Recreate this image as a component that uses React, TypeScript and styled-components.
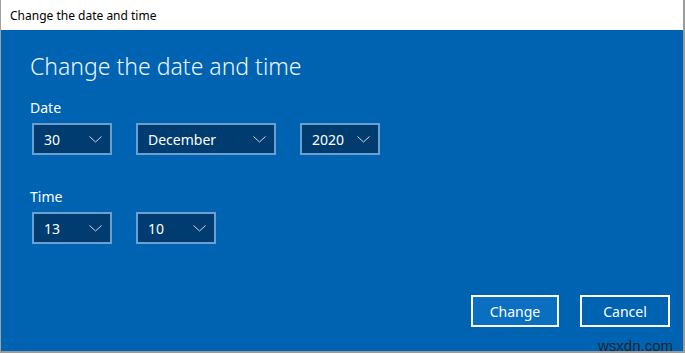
import React from "react";
import styled, { createGlobalStyle } from "styled-components";

const GlobalStyle = createGlobalStyle`
  html, body {
    margin: 0;
    padding: 0;
    background: #ffffff;
  }
  body {
    font-family: "Segoe UI", "Noto Sans", sans-serif;
  }
`;

interface FieldProps {
  value: string;
  width: number;
}

function ComboBox({ value, width }: FieldProps) {
  return (
    <Combo $width={width}>
      <span>{value}</span>
      <svg width="13" height="7" viewBox="0 0 13 7" fill="none">
        <path d="M0.5 0.5 L6.5 6 L12.5 0.5" stroke="#c6d9ec" strokeWidth="1" />
      </svg>
    </Combo>
  );
}

export default function App() {
  return (
    <>
      <GlobalStyle />
      <Window>
        <TitleBar>Change the date and time</TitleBar>
        <Content>
          <Heading>Change the date and time</Heading>

          <Label $top={16}>Date</Label>
          <Row>
            <ComboBox value="30" width={80} />
            <ComboBox value="December" width={140} />
            <ComboBox value="2020" width={80} />
          </Row>

          <Label $top={32}>Time</Label>
          <Row>
            <ComboBox value="13" width={80} />
            <ComboBox value="10" width={80} />
          </Row>

          <Footer>
            <Button $primary $width={88}>Change</Button>
            <Button $width={90}>Cancel</Button>
          </Footer>
          <Watermark>wsxdn.com</Watermark>
        </Content>
      </Window>
    </>
  );
}

const Window = styled.div`
  box-sizing: border-box;
  width: 685px;
  height: 353px;
  display: flex;
  flex-direction: column;
  border-left: 1px solid #a0a0a0;
  border-right: 2px solid #9a9a9a;
  border-bottom: 2px solid #9a9a9a;
  background: #ffffff;
`;

const TitleBar = styled.div`
  height: 30px;
  flex: none;
  display: flex;
  align-items: center;
  padding-left: 9px;
  font-size: 12px;
  color: #000000;
  background: #ffffff;
`;

const Content = styled.div`
  position: relative;
  flex: 1;
  display: flex;
  flex-direction: column;
  background: #0063b1;
  padding: 20px 0 0 29px;
  color: #ffffff;
`;

const Heading = styled.h1`
  margin: 0;
  font-size: 23px;
  font-weight: 300;
  line-height: 32px;
  color: #eef5fb;
`;

const Label = styled.div<{ $top: number }>`
  margin-top: ${(p) => p.$top}px;
  font-size: 14px;
  line-height: 20px;
  color: #ffffff;
`;

const Row = styled.div`
  display: flex;
  gap: 24px;
  margin-top: 5px;
  padding-left: 2px;
`;

const Combo = styled.div<{ $width: number }>`
  box-sizing: border-box;
  width: ${(p) => p.$width}px;
  height: 32px;
  display: flex;
  align-items: center;
  justify-content: space-between;
  padding: 0 8px 0 10px;
  border: 2px solid #6a9fd0;
  background: #003c6f;
  font-size: 14px;
  color: #ffffff;

  svg {
    flex: none;
  }
`;

const Footer = styled.div`
  margin-top: auto;
  margin-bottom: 24px;
  display: flex;
  justify-content: flex-end;
  gap: 21px;
  padding-right: 13px;
`;

const Button = styled.button<{ $primary?: boolean; $width: number }>`
  box-sizing: border-box;
  width: ${(p) => p.$width}px;
  height: 32px;
  border: 2px solid #ffffff;
  background: ${(p) => (p.$primary ? "#0a6fc0" : "#0063b1")};
  color: #ffffff;
  font-family: inherit;
  font-size: 14px;
  padding: 0;
`;

const Watermark = styled.div`
  position: absolute;
  right: 10px;
  bottom: -3px;
  font-family: "Liberation Sans", Arial, sans-serif;
  font-size: 15px;
  color: #1a1a1a;
  opacity: 0.85;
`;
